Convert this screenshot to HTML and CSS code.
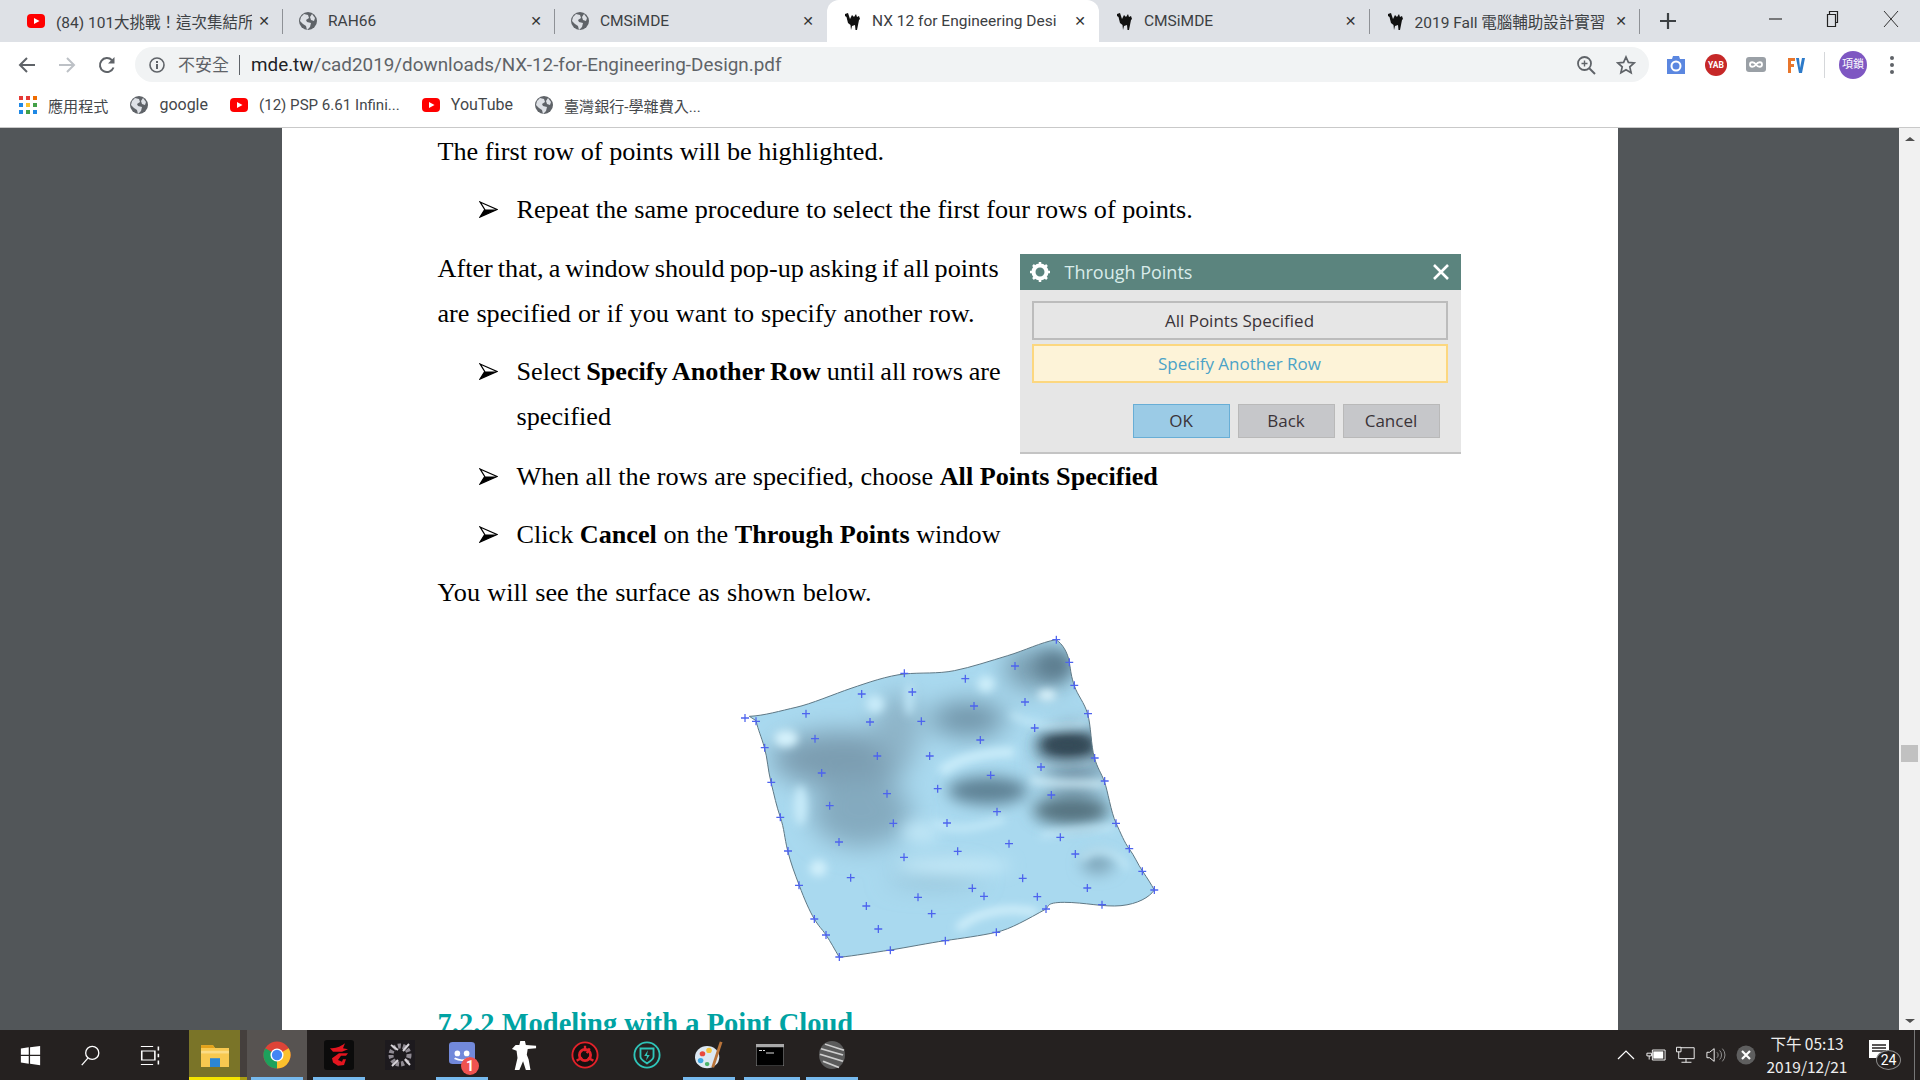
FILE: index.html
```html
<!DOCTYPE html>
<html lang="en">
<head>
    <meta charset="UTF-8">
    <meta name="viewport" content="width=device-width, initial-scale=1.0">
    <title>NX 12 for Engineering Design</title>
    <link rel="stylesheet" href="styles.css">
</head>
<body>
    <svg class="defs" width="0" height="0">
        <symbol id="i-yt" viewBox="0 0 20 20">
            <rect x="1" y="3" width="18" height="14" rx="4" fill="#f00"/>
            <path d="M8 7l5.5 3L8 13z" fill="#fff"/>
        </symbol>
        <symbol id="i-globe" viewBox="0 0 20 20">
            <circle cx="10" cy="10" r="9" fill="#5f6368"/>
            <path d="M6 3l4 1 1 3-3 2 1 2 4 1-1 4-3 3-1-4-3-2-3-3 1-4zM14 3l3 4-1 3-3-1-1-3z" fill="#dee1e6"/>
        </symbol>
        <symbol id="i-camel" viewBox="0 0 20 20">
            <path d="M3 3l3-1 1 3 1 3 2-4 2 2 2-3 1 3 2-1 1 3-1 1-1 5-1 5h-1.500l-.5-5-3 1-1 4H9l-.5-5L6 12 4.500 6 3 5z" fill="#111"/>
        </symbol>
        <symbol id="i-plus" viewBox="-13 -13 26 26">
            <path d="M-12 0H12M0-12V12" stroke="#4d63ee" stroke-width="3.800" fill="none"/>
        </symbol>
        <symbol id="i-bullet" viewBox="0 0 20 18">
            <path d="M1 1l18 8-18 8 5-8z" fill="#fff" stroke="#000" stroke-width="1.300"/>
            <path d="M6 9l13 0-18 8z" fill="#000"/>
        </symbol>
    </svg>

    <div class="tabstrip">
        <div class="tab">
            <svg class="favicon"><use href="#i-yt"/></svg>
            <span class="tab-title">(84) 101大挑戰！這次集結所</span>
            <span class="tab-close">✕</span>
        </div>
        <div class="tab">
            <svg class="favicon"><use href="#i-globe"/></svg>
            <span class="tab-title">RAH66</span>
            <span class="tab-close">✕</span>
        </div>
        <div class="tab no-line">
            <svg class="favicon"><use href="#i-globe"/></svg>
            <span class="tab-title">CMSiMDE</span>
            <span class="tab-close">✕</span>
        </div>
        <div class="tab active">
            <svg class="favicon"><use href="#i-camel"/></svg>
            <span class="tab-title">NX 12 for Engineering Desi</span>
            <span class="tab-close">✕</span>
        </div>
        <div class="tab narrow">
            <svg class="favicon"><use href="#i-camel"/></svg>
            <span class="tab-title">CMSiMDE</span>
            <span class="tab-close">✕</span>
        </div>
        <div class="tab narrow">
            <svg class="favicon"><use href="#i-camel"/></svg>
            <span class="tab-title">2019 Fall 電腦輔助設計實習</span>
            <span class="tab-close">✕</span>
        </div>
        <svg class="new-tab" width="18" height="18" viewBox="0 0 18 18"><path d="M9 1v16M1 9h16" stroke="#3c4043" stroke-width="2.200"/></svg>
        <div class="win-controls">
            <svg width="16" height="16" viewBox="0 0 16 16"><path d="M1 8h13" stroke="#333" stroke-width="1.200"/></svg>
            <svg width="16" height="18" viewBox="0 0 16 18"><path d="M4.500 4.500V1.500h8v11h-2.500M2.500 4.500h8v12h-8z" fill="none" stroke="#222" stroke-width="1.200"/></svg>
            <svg width="18" height="18" viewBox="0 0 18 18"><path d="M2 1l14 16M16 1L2 17" stroke="#333" stroke-width="1"/></svg>
        </div>
    </div>

    <div class="toolbar">
        <svg class="nav-btn" viewBox="0 0 20 20"><path d="M18 10H3M10 3l-7 7 7 7" fill="none" stroke="#5f6368" stroke-width="2"/></svg>
        <svg class="nav-btn" viewBox="0 0 20 20"><path d="M2 10h15M10 3l7 7-7 7" fill="none" stroke="#bdc1c6" stroke-width="2"/></svg>
        <svg class="nav-btn" viewBox="0 0 20 20"><path d="M16.500 12.500A7 7 0 1 1 15 5.200" fill="none" stroke="#5f6368" stroke-width="2"/><path d="M17.500 2v6.500H11z" fill="#5f6368"/></svg>
        <div class="omnibox">
            <svg class="info" width="16" height="16" viewBox="0 0 16 16"><circle cx="8" cy="8" r="7" fill="none" stroke="#5f6368" stroke-width="1.600"/><path d="M7 7h2v5H7zM7 4h2v2H7z" fill="#5f6368"/></svg>
            <span class="not-secure">不安全</span>
            <span class="url"><b>mde.tw</b>/cad2019/downloads/NX-12-for-Engineering-Design.pdf</span>
            <svg class="omni-zoom" width="20" height="20" viewBox="0 0 20 20"><circle cx="8.500" cy="8.500" r="6.500" fill="none" stroke="#5f6368" stroke-width="1.800"/><path d="M13 13l6 6" stroke="#5f6368" stroke-width="2"/><path d="M8.500 5.500v6M5.500 8.500h6" stroke="#5f6368" stroke-width="1.400"/></svg>
            <svg class="omni-star" width="20" height="20" viewBox="0 0 20 20"><path d="M10 2l2.400 5.400 5.800.6-4.400 3.900 1.300 5.800L10 14.700l-5.100 3 1.300-5.800L1.800 8l5.800-.6z" fill="none" stroke="#5f6368" stroke-width="1.700"/></svg>
        </div>
        <div class="extensions">
            <svg width="22" height="22" viewBox="0 0 22 22"><path d="M2 5h5l1-3h6l1 3h5v15H2z" fill="#5b87e0"/><circle cx="11" cy="12" r="4.500" fill="none" stroke="#fff" stroke-width="2"/></svg>
            <span class="ext-yab">YAB</span>
            <svg width="22" height="22" viewBox="0 0 22 22"><rect x="1" y="3" width="20" height="15" rx="3" fill="#9aa0a6"/><path d="M11 10.500c-2-3-6-3-6 0s4 3 6 0 6-3 6 0-4 3-6 0z" fill="none" stroke="#fff" stroke-width="1.800"/></svg>
            <svg width="22" height="22" viewBox="0 0 22 22"><path d="M3 4h7v3H6v3h3v3H6v6H3z" fill="#e8762c"/><path d="M11 4h3l1 10 2-10h3l-3 15h-3z" fill="#2c7ac9"/></svg>
            <span class="ext-divider"></span>
            <span class="avatar">項鎖</span>
            <svg class="menu-dots" width="6" height="20" viewBox="0 0 6 20"><circle cx="3" cy="3" r="2" fill="#5f6368"/><circle cx="3" cy="10" r="2" fill="#5f6368"/><circle cx="3" cy="17" r="2" fill="#5f6368"/></svg>
        </div>
    </div>

    <div class="bookmarks">
        <div class="bookmark apps">
            <span class="apps-grid">
                <i class="c-r"></i><i class="c-r"></i><i class="c-o"></i>
                <i class="c-b"></i><i class="c-y"></i><i class="c-g"></i>
                <i class="c-b"></i><i class="c-g"></i><i class="c-b"></i>
            </span>
            <span class="small">應用程式</span>
        </div>
        <div class="bookmark"><svg class="favicon"><use href="#i-globe"/></svg><span>google</span></div>
        <div class="bookmark"><svg class="favicon"><use href="#i-yt"/></svg><span class="small">(12) PSP 6.61 Infini...</span></div>
        <div class="bookmark"><svg class="favicon"><use href="#i-yt"/></svg><span>YouTube</span></div>
        <div class="bookmark"><svg class="favicon"><use href="#i-globe"/></svg><span class="small">臺灣銀行-學雜費入...</span></div>
    </div>

    <div class="viewer">
        <div class="pdf-area">
            <div class="pdf-page">
                <p>The first row of points will be highlighted.</p>
                <p class="bullet"><svg class="arrow"><use href="#i-bullet"/></svg>Repeat the same procedure to select the first four rows of points.</p>

                <div class="with-dialog">
                    <div class="with-dialog-text">
                        <p class="tight">After that, a window should pop-up asking if all points<br>are specified or if you want to specify another row.</p>
                        <p class="bullet"><svg class="arrow"><use href="#i-bullet"/></svg>Select <b>Specify Another Row</b> until all rows are specified</p>
                    </div>
                    <div class="dialog">
                        <div class="dialog-title">
                            <svg width="22" height="22" viewBox="0 0 22 22"><circle cx="11" cy="11" r="6.500" fill="none" stroke="#fff" stroke-width="4"/><path d="M11 1v4M11 17v4M1 11h4M17 11h4M4 4l3 3M15 15l3 3M18 4l-3 3M7 15l-3 3" stroke="#fff" stroke-width="2.500"/></svg>
                            <span>Through Points</span>
                            <svg class="dialog-x" width="18" height="18" viewBox="0 0 18 18"><path d="M2 2l14 14M16 2L2 16" stroke="#fff" stroke-width="2.600"/></svg>
                        </div>
                        <div class="dialog-body">
                            <div class="choice">All Points Specified</div>
                            <div class="choice hover">Specify Another Row</div>
                            <div class="dialog-buttons">
                                <span class="btn primary">OK</span>
                                <span class="btn">Back</span>
                                <span class="btn">Cancel</span>
                            </div>
                        </div>
                    </div>
                </div>

                <p class="bullet"><svg class="arrow"><use href="#i-bullet"/></svg>When all the rows are specified, choose <b>All Points Specified</b></p>
                <p class="bullet"><svg class="arrow"><use href="#i-bullet"/></svg>Click <b>Cancel</b> on the <b>Through Points</b> window</p>
                <p class="last-line">You will see the surface as shown below.</p>

                <svg class="surface" width="460" height="350" viewBox="0 0 1380 1050">
                    <defs>
                        <filter id="wide" x="-40%" y="-40%" width="180%" height="180%"><feGaussianBlur stdDeviation="38"/></filter>
                        <filter id="soft" x="-40%" y="-40%" width="180%" height="180%"><feGaussianBlur stdDeviation="22"/></filter>
                        <filter id="softer" x="-40%" y="-40%" width="180%" height="180%"><feGaussianBlur stdDeviation="12"/></filter>
                        <clipPath id="sheet"><path d="M85 292C130 290 180 275 225 265S340 225 390 208 500 170 550 165 650 165 700 155 810 125 860 110 960 70 1005 62C1025 75 1040 100 1045 130S1050 170 1060 200 1090 250 1100 285 1110 380 1120 415 1140 460 1150 487 1170 580 1185 612 1210 670 1225 690 1250 735 1265 757 1290 795 1300 813C1285 835 1250 855 1200 860S1090 850 1030 850 985 865 975 870C920 900 870 930 825 940S720 958 672 965 560 985 508 993 400 1010 355 1015C340 990 330 970 315 948S295 925 280 900 250 840 235 800 210 735 200 695 190 630 178 595 160 530 150 490 140 420 130 385 112 335 105 305z"/></clipPath>
                    </defs>
                    <g clip-path="url(#sheet)">
                        <rect width="1380" height="1050" fill="#a9d9ef"/>
                        <g filter="url(#wide)">
                            <ellipse cx="360" cy="420" rx="210" ry="85" fill="#7b9db1"/>
                            <ellipse cx="420" cy="580" rx="150" ry="105" fill="#84aabf"/>
                            <ellipse cx="530" cy="330" rx="70" ry="110" fill="#8db3c7"/>
                            <ellipse cx="740" cy="300" rx="115" ry="50" fill="#6d90a4"/>
                            <ellipse cx="950" cy="150" rx="100" ry="60" fill="#7295a8"/>
                            <ellipse cx="640" cy="775" rx="140" ry="20" fill="#90bace"/>
                            <ellipse cx="1060" cy="440" rx="90" ry="120" fill="#7b9fb2"/>
                        </g>
                        <g filter="url(#soft)">
                            <ellipse cx="1000" cy="140" rx="55" ry="45" fill="#5d7e90"/>
                            <ellipse cx="800" cy="515" rx="120" ry="42" fill="#5f8295"/>
                            <ellipse cx="1050" cy="575" rx="115" ry="42" fill="#54727f"/>
                            <ellipse cx="1130" cy="735" rx="48" ry="28" fill="#7ca2b6"/>
                            <ellipse cx="700" cy="740" rx="170" ry="24" fill="#c4e9f8"/>
                            <ellipse cx="600" cy="640" rx="55" ry="30" fill="#c0e6f6"/>
                            <ellipse cx="1040" cy="378" rx="95" ry="40" fill="#2f4350"/>
                        </g>
                        <g filter="url(#softer)">
                            <ellipse cx="1040" cy="378" rx="65" ry="20" fill="#364b59"/>
                            <path d="M870 285C930 320 1000 330 1100 312" fill="none" stroke="#c9ecfa" stroke-width="14"/>
                            <path d="M930 482C1000 500 1080 490 1150 495" fill="none" stroke="#d6f2fc" stroke-width="18"/>
                            <path d="M920 450C1000 430 1060 440 1120 430" fill="none" stroke="#c0e6f6" stroke-width="8"/>
                            <path d="M660 460C700 420 790 400 880 400" fill="none" stroke="#cbedfa" stroke-width="30"/>
                            <path d="M640 610C700 640 760 630 850 600" fill="none" stroke="#cbedfa" stroke-width="16"/>
                            <path d="M960 650C1040 630 1110 630 1180 625" fill="none" stroke="#d0effb" stroke-width="12"/>
                            <path d="M1080 720C1120 680 1190 690 1220 750" fill="none" stroke="#cdeefa" stroke-width="12"/>
                            <path d="M710 930C760 880 850 860 950 880" fill="none" stroke="#d8f3fc" stroke-width="20"/>
                            <ellipse cx="195" cy="358" rx="36" ry="26" fill="#d5f2fc"/>
                            <ellipse cx="238" cy="560" rx="20" ry="60" fill="#c8ebf9"/>
                            <ellipse cx="292" cy="748" rx="26" ry="24" fill="#d2f0fb"/>
                            <ellipse cx="462" cy="255" rx="28" ry="28" fill="#c8ebf9"/>
                            <ellipse cx="565" cy="240" rx="14" ry="50" fill="#bde4f5"/>
                            <ellipse cx="795" cy="195" rx="26" ry="24" fill="#cdeefa"/>
                            <ellipse cx="978" cy="228" rx="28" ry="16" fill="#dff5fd"/>
                        </g>
                    </g>
                    <path d="M85 292C130 290 180 275 225 265S340 225 390 208 500 170 550 165 650 165 700 155 810 125 860 110 960 70 1005 62C1025 75 1040 100 1045 130S1050 170 1060 200 1090 250 1100 285 1110 380 1120 415 1140 460 1150 487 1170 580 1185 612 1210 670 1225 690 1250 735 1265 757 1290 795 1300 813C1285 835 1250 855 1200 860S1090 850 1030 850 985 865 975 870C920 900 870 930 825 940S720 958 672 965 560 985 508 993 400 1010 355 1015C340 990 330 970 315 948S295 925 280 900 250 840 235 800 210 735 200 695 190 630 178 595 160 530 150 490 140 420 130 385 112 335 105 305z" fill="none" stroke="#5f7885" stroke-width="3"/>
                    <g class="marks">
                        <use href="#i-plus" width="26" height="26" x="59" y="284"/><use href="#i-plus" width="26" height="26" x="92" y="294"/>
                        <use href="#i-plus" width="26" height="26" x="118" y="373"/><use href="#i-plus" width="26" height="26" x="138" y="477"/>
                        <use href="#i-plus" width="26" height="26" x="165" y="582"/><use href="#i-plus" width="26" height="26" x="188" y="683"/>
                        <use href="#i-plus" width="26" height="26" x="221" y="786"/><use href="#i-plus" width="26" height="26" x="267" y="887"/>
                        <use href="#i-plus" width="26" height="26" x="302" y="935"/><use href="#i-plus" width="26" height="26" x="342" y="1001"/>
                        <use href="#i-plus" width="26" height="26" x="495" y="981"/><use href="#i-plus" width="26" height="26" x="660" y="952"/>
                        <use href="#i-plus" width="26" height="26" x="813" y="927"/><use href="#i-plus" width="26" height="26" x="962" y="857"/>
                        <use href="#i-plus" width="26" height="26" x="1130" y="844"/><use href="#i-plus" width="26" height="26" x="1287" y="800"/>
                        <use href="#i-plus" width="26" height="26" x="1251" y="744"/><use href="#i-plus" width="26" height="26" x="1212" y="676"/>
                        <use href="#i-plus" width="26" height="26" x="1172" y="600"/><use href="#i-plus" width="26" height="26" x="1138" y="473"/>
                        <use href="#i-plus" width="26" height="26" x="1108" y="404"/><use href="#i-plus" width="26" height="26" x="1088" y="271"/>
                        <use href="#i-plus" width="26" height="26" x="1047" y="186"/><use href="#i-plus" width="26" height="26" x="1032" y="117"/>
                        <use href="#i-plus" width="26" height="26" x="993" y="49"/><use href="#i-plus" width="26" height="26" x="869" y="128"/>
                        <use href="#i-plus" width="26" height="26" x="899" y="236"/><use href="#i-plus" width="26" height="26" x="928" y="314"/>
                        <use href="#i-plus" width="26" height="26" x="947" y="431"/><use href="#i-plus" width="26" height="26" x="978" y="515"/>
                        <use href="#i-plus" width="26" height="26" x="1005" y="642"/><use href="#i-plus" width="26" height="26" x="1050" y="692"/>
                        <use href="#i-plus" width="26" height="26" x="1086" y="794"/><use href="#i-plus" width="26" height="26" x="720" y="166"/>
                        <use href="#i-plus" width="26" height="26" x="746" y="248"/><use href="#i-plus" width="26" height="26" x="765" y="350"/>
                        <use href="#i-plus" width="26" height="26" x="796" y="456"/><use href="#i-plus" width="26" height="26" x="815" y="565"/>
                        <use href="#i-plus" width="26" height="26" x="851" y="661"/><use href="#i-plus" width="26" height="26" x="892" y="765"/>
                        <use href="#i-plus" width="26" height="26" x="936" y="820"/><use href="#i-plus" width="26" height="26" x="537" y="150"/>
                        <use href="#i-plus" width="26" height="26" x="561" y="206"/><use href="#i-plus" width="26" height="26" x="588" y="294"/>
                        <use href="#i-plus" width="26" height="26" x="613" y="398"/><use href="#i-plus" width="26" height="26" x="637" y="496"/>
                        <use href="#i-plus" width="26" height="26" x="665" y="599"/><use href="#i-plus" width="26" height="26" x="697" y="684"/>
                        <use href="#i-plus" width="26" height="26" x="741" y="795"/><use href="#i-plus" width="26" height="26" x="776" y="819"/>
                        <use href="#i-plus" width="26" height="26" x="409" y="212"/><use href="#i-plus" width="26" height="26" x="434" y="296"/>
                        <use href="#i-plus" width="26" height="26" x="456" y="398"/><use href="#i-plus" width="26" height="26" x="485" y="511"/>
                        <use href="#i-plus" width="26" height="26" x="504" y="600"/><use href="#i-plus" width="26" height="26" x="536" y="702"/>
                        <use href="#i-plus" width="26" height="26" x="578" y="822"/><use href="#i-plus" width="26" height="26" x="619" y="871"/>
                        <use href="#i-plus" width="26" height="26" x="242" y="271"/><use href="#i-plus" width="26" height="26" x="269" y="346"/>
                        <use href="#i-plus" width="26" height="26" x="289" y="449"/><use href="#i-plus" width="26" height="26" x="313" y="547"/>
                        <use href="#i-plus" width="26" height="26" x="341" y="656"/><use href="#i-plus" width="26" height="26" x="376" y="763"/>
                        <use href="#i-plus" width="26" height="26" x="423" y="848"/><use href="#i-plus" width="26" height="26" x="459" y="917"/>
                    </g>
                </svg>

                <h2>7.2.2 Modeling with a Point Cloud</h2>
            </div>
        </div>
        <div class="scrollbar">
            <span class="scroll-up"></span>
            <span class="scroll-thumb"></span>
            <span class="scroll-down"></span>
        </div>
    </div>

    <div class="taskbar">
        <div class="task-fixed">
            <svg width="21" height="21" viewBox="0 0 24 24"><path d="M1 4l9-1.300V11H1zM11.500 2.500L23 1v10H11.500zM1 12.500h9v8.800l-9-1.300zM11.500 12.500H23V23l-11.500-1.600z" fill="#fff"/></svg>
        </div>
        <div class="task-fixed">
            <svg width="21" height="21" viewBox="0 0 24 24"><circle cx="14" cy="9" r="7.500" fill="none" stroke="#fff" stroke-width="1.500"/><path d="M9 15l-7 8" stroke="#fff" stroke-width="1.500"/></svg>
        </div>
        <div class="task-fixed">
            <svg width="21" height="19" viewBox="0 0 24 34" preserveAspectRatio="none"><path d="M1 1h14M1 33h14M2 9h15v16H2z M21 1v7M21 14v6M21 26v7" fill="none" stroke="#fff" stroke-width="1.800"/></svg>
        </div>
        <div class="task-apps">
            <div class="task-app explorer">
                <svg width="28" height="23" viewBox="0 0 28 34" preserveAspectRatio="none"><path d="M0 2h12l2 4h14v28H0z" fill="#f8c950"/><path d="M0 2h12l2 4H0z" fill="#e3a21a"/><path d="M9 34V21h10v13z" fill="#2b86d6"/><path d="M0 10h28v4H0z" fill="#fbdc85"/></svg>
            </div>
            <div class="task-app chrome-on open">
                <svg width="28" height="28" viewBox="0 0 30 30"><circle cx="15" cy="15" r="14.500" fill="#de4437"/><path d="M15 15L2.500 7.700A14.500 14.500 0 0 0 15 29.500z" fill="#1da15c"/><path d="M15 15v14.500A14.500 14.500 0 0 0 27.500 7.700z" fill="#fbc02d"/><circle cx="15" cy="15" r="7" fill="#fff"/><circle cx="15" cy="15" r="5.500" fill="#4285f4"/></svg>
            </div>
            <div class="task-app open">
                <svg width="30" height="30" viewBox="0 0 30 36" preserveAspectRatio="none"><rect width="30" height="36" rx="3" fill="#0b0b0b"/><path d="M6 10c6 0 9-1 15-6l-2 6 5 1-6 3H9zM15 16h9l-2 3h-5l-3 5 4 2 1-3h3l-2 7-6 1-5-4-1-5z" fill="#e3151f"/></svg>
            </div>
            <div class="task-app">
                <svg width="30" height="30" viewBox="0 0 30 30"><rect width="30" height="30" fill="#1d1a1e"/><circle cx="15" cy="15" r="9" fill="none" stroke="#8f8a93" stroke-width="5" stroke-dasharray="3 2"/><path d="M6 5l7 5M24 4l-6 7M7 26l6-6M25 25l-5-6" stroke="#d7d4da" stroke-width="2"/></svg>
            </div>
            <div class="task-app open badge-wrap">
                <svg width="26" height="26" viewBox="0 0 28 32" preserveAspectRatio="none"><path d="M4 0h20a4 4 0 0 1 4 4v28l-7-5H4a4 4 0 0 1-4-4V4a4 4 0 0 1 4-4z" fill="#7289da"/><ellipse cx="9" cy="14" rx="3" ry="3.500" fill="#fff"/><ellipse cx="19" cy="14" rx="3" ry="3.500" fill="#fff"/><path d="M6 20c5 3 11 3 16 0" stroke="#fff" stroke-width="2" fill="none"/></svg>
                <span class="task-badge">1</span>
            </div>
            <div class="task-app">
                <svg width="26" height="29" viewBox="0 0 28 36" preserveAspectRatio="none"><path d="M10 0h5l1 5 11 1v3l-9 1-1 7 2 6 2 13h-5l-3-11-4 11H4l3-15-1-9-5-2 4-5 4 0z" fill="#fff"/></svg>
            </div>
            <div class="task-app">
                <svg width="28" height="28" viewBox="0 0 30 30"><circle cx="15" cy="15" r="13.500" fill="#161010" stroke="#e3222a" stroke-width="2"/><circle cx="15" cy="15" r="6" fill="none" stroke="#e3222a" stroke-width="3"/><path d="M15 5v6M24 21l-6-3M6 21l6-3M20 8l-3 5" stroke="#e3222a" stroke-width="2.500"/></svg>
            </div>
            <div class="task-app">
                <svg width="28" height="28" viewBox="0 0 30 30"><circle cx="15" cy="15" r="13.500" fill="none" stroke="#2fc4b8" stroke-width="2"/><path d="M8 8h14v9c0 3-4 5-7 7-3-2-7-4-7-7z" fill="none" stroke="#2fc4b8" stroke-width="2"/><path d="M16 10l-4 6h3l-1 5 4-6h-3z" fill="#2fc4b8"/></svg>
            </div>
            <div class="task-app open">
                <svg width="28" height="29" viewBox="0 0 30 34" preserveAspectRatio="none"><ellipse cx="13" cy="19" rx="13" ry="13" fill="#dce8f2"/><circle cx="8" cy="15" r="3" fill="#e9493c"/><circle cx="15" cy="11" r="3" fill="#f3c33c"/><circle cx="6" cy="23" r="3" fill="#3fa8e0"/><circle cx="13" cy="27" r="2.500" fill="#49b36a"/><path d="M28 1l-9 30" stroke="#b9743a" stroke-width="3"/></svg>
            </div>
            <div class="task-app open two">
                <svg width="28" height="22" viewBox="0 0 28 34" preserveAspectRatio="none"><rect width="28" height="34" fill="#000" stroke="#a6a6a6"/><rect width="28" height="5" fill="#a9a9a9"/><path d="M3 10h3M7 10h2M10 14h8" stroke="#ddd" stroke-width="1.500"/></svg>
            </div>
            <div class="task-app open">
                <svg width="26" height="28" viewBox="0 0 26 36" preserveAspectRatio="none"><ellipse cx="13" cy="18" rx="13" ry="18" fill="#5b5b5b"/><path d="M2 10l22 8M1 17l23 9M4 26l16 8M6 4l19 8" stroke="#cfcfcf" stroke-width="2"/></svg>
            </div>
        </div>
        <div class="tray">
            <svg width="18" height="10" viewBox="0 0 18 10"><path d="M1 9l8-8 8 8" fill="none" stroke="#fff" stroke-width="1.200"/></svg>
            <svg width="22" height="14" viewBox="0 0 22 14"><path d="M7 1.500h14v11H7z" fill="none" stroke="#fff"/><path d="M8 3h11v8H8z" fill="#fff"/><path d="M1 5h5v3H1zM3.500 8v4" stroke="#fff" fill="none"/></svg>
            <svg width="22" height="18" viewBox="0 0 22 18"><path d="M3 1h17v12H3zM11 13v4M6 17h11" fill="none" stroke="#fff"/><path d="M0.500 0.500h5v5h-5z" fill="#252120" stroke="#fff"/></svg>
            <svg width="22" height="18" viewBox="0 0 22 18"><path d="M1 6h3l5-4v14l-5-4H1z" fill="none" stroke="#fff"/><path d="M12 6a4 4 0 0 1 0 6M15 4a7 7 0 0 1 0 10M18 2a10 10 0 0 1 0 14" fill="none" stroke="#9b9b9b"/></svg>
            <svg width="20" height="20" viewBox="0 0 20 20"><circle cx="10" cy="10" r="9.500" fill="#5f5f5f"/><path d="M6 6l8 8M14 6l-8 8" stroke="#fff" stroke-width="2.200"/></svg>
            <div class="clock"><span>下午 05:13</span><span>2019/12/21</span></div>
            <div class="action-center">
                <svg width="20" height="18" viewBox="0 0 20 18"><path d="M0 0h20v18H0z" fill="#fff"/><path d="M3 5h14M3 8h14M3 11h14" stroke="#252120" stroke-width="1.400"/></svg>
                <span class="notif-count">24</span>
            </div>
            <span class="show-desktop"></span>
        </div>
    </div>
</body>
</html>
```

FILE: styles.css
```css
html, body {
    margin: 0;
    padding: 0;
    width: 1920px;
    height: 1080px;
    overflow: hidden;
}

body {
    display: flex;
    flex-direction: column;
    font-family: Roboto, "Noto Sans CJK TC", sans-serif;
    color: #3c4043;
    background-color: #fff;
}

.defs {
    position: absolute;
}

/* tab strip */
.tabstrip {
    height: 42px;
    flex: none;
    display: flex;
    align-items: stretch;
    padding-left: 11px;
    background-color: #dee1e6;
}

.tab {
    width: 272px;
    box-sizing: border-box;
    display: flex;
    align-items: center;
    padding: 0 10px 0 15px;
    font-size: 15.5px;
    position: relative;
}

.tab.narrow {
    width: 270.500px;
}

.tab::after {
    content: "";
    position: absolute;
    right: 0;
    top: 9px;
    width: 1px;
    height: 25px;
    background-color: #8e9196;
}

.tab.no-line::after,
.tab.active::after {
    display: none;
}

.tab.active {
    background-color: #fff;
    border-radius: 12px 12px 0 0;
}

.favicon {
    width: 20px;
    height: 20px;
    flex: none;
}

.tab-title {
    flex: 1;
    margin-left: 10px;
    overflow: hidden;
    white-space: nowrap;
}

.tab-close {
    flex: none;
    width: 18px;
    margin-left: 3px;
    font-size: 14px;
    font-family: "DejaVu Sans", sans-serif;
    font-weight: bold;
    color: #333;
    text-align: center;
}

.new-tab {
    align-self: center;
    margin-left: 19px;
}

.win-controls {
    margin-left: auto;
    width: 152px;
    padding-right: 20px;
    box-sizing: border-box;
    display: flex;
    align-items: center;
    justify-content: space-between;
    padding-bottom: 4px;
}

/* toolbar */
.toolbar {
    height: 42px;
    flex: none;
    display: flex;
    align-items: center;
    padding-left: 17px;
    background-color: #fff;
}

.nav-btn {
    width: 20px;
    height: 20px;
    margin-top: 3px;
    margin-right: 20px;
    flex: none;
}

.omnibox {
    width: 1514px;
    height: 35px;
    box-sizing: border-box;
    margin-left: -2px;
    margin-top: 3px;
    display: flex;
    align-items: center;
    padding: 0 14px;
    border-radius: 18px;
    background-color: #f1f3f4;
    flex: none;
}

.info {
    flex: none;
}

.not-secure {
    margin-left: 13px;
    padding-right: 10px;
    border-right: 1px solid #5f6368;
    font-size: 17px;
    line-height: 20px;
    color: #5f6368;
}

.url {
    margin-left: 11px;
    font-size: 18.850px;
    color: #5f6368;
    white-space: nowrap;
}

.url b {
    font-weight: normal;
    color: #202124;
}

.omni-zoom {
    flex: none;
    margin-left: auto;
    margin-right: -4px;
}

.omni-star {
    flex: none;
    margin-left: 24px;
    margin-right: -1px;
}

.extensions {
    flex: 1;
    display: flex;
    align-items: center;
    margin-top: 3px;
    padding-left: 16px;
    gap: 18px;
}

.ext-yab {
    width: 22px;
    height: 22px;
    border-radius: 50%;
    background-color: #c62828;
    color: #fff;
    font-size: 8.500px;
    font-weight: bold;
    line-height: 22px;
    text-align: center;
}

.ext-divider {
    width: 1px;
    height: 26px;
    background-color: #d5d7da;
    margin-left: -1px;
}

.avatar {
    width: 28px;
    height: 28px;
    margin-left: -4px;
    border-radius: 50%;
    background-color: #7e57c2;
    color: #fff;
    font-size: 11px;
    line-height: 28px;
    text-align: center;
}

.menu-dots {
    margin-left: 4px;
}

/* bookmarks bar */
.bookmarks {
    height: 44px;
    flex: none;
    display: flex;
    align-items: center;
    gap: 21px;
    padding-left: 19px;
    padding-bottom: 2px;
    box-sizing: border-box;
    background-color: #fff;
    border-bottom: 1px solid #c9c9c9;
    font-size: 16px;
    color: #44474b;
}

.bookmark {
    display: flex;
    align-items: center;
    gap: 10px;
    white-space: nowrap;
}

.bookmark .small {
    font-size: 15.100px;
}

.apps {
    gap: 11px;
}

.apps-grid {
    width: 18px;
    display: grid;
    grid-template-columns: repeat(3, 4px);
    gap: 3px;
}

.apps-grid i {
    display: block;
    height: 4px;
}

.c-r { background-color: #e53935; }
.c-o { background-color: #ef6c00; }
.c-b { background-color: #1e88e5; }
.c-y { background-color: #fbc02d; }
.c-g { background-color: #43a047; }

/* pdf viewer */
.viewer {
    flex: 1;
    min-height: 0;
    display: flex;
}

.pdf-area {
    flex: 1;
    display: flex;
    justify-content: center;
    background-color: #525659;
    overflow: hidden;
}

.pdf-page {
    width: 1336px;
    box-sizing: border-box;
    padding: 1px 100px 0 156px;
    background-color: #fff;
    font-family: "Liberation Serif", serif;
    font-size: 26.200px;
    line-height: 45px;
    color: #000;
}

.pdf-page p {
    margin: 0 0 13.300px;
}

.pdf-page .last-line {
    word-spacing: 0.700px;
}

.bullet {
    position: relative;
    padding-left: 79px;
}

.arrow {
    position: absolute;
    left: 41px;
    top: 14px;
    width: 19px;
    height: 17px;
}

.with-dialog {
    display: flex;
    align-items: flex-start;
}

.with-dialog-text {
    width: 565px;
    flex: none;
    word-spacing: -0.900px;
}

.pdf-page .tight {
    white-space: nowrap;
    word-spacing: 0.400px;
}

.pdf-page .tight::first-line {
    word-spacing: -1.500px;
}

.dialog {
    width: 441px;
    height: 200px;
    margin-top: 8px;
    margin-left: 17px;
    flex: none;
    box-sizing: border-box;
    background-color: #e6e6e6;
    border-bottom: 2px solid #c4c4c4;
    font-family: "Open Sans", sans-serif;
    font-size: 17px;
    line-height: 24px;
    word-spacing: 0;
}

.dialog-title {
    height: 36px;
    display: flex;
    align-items: center;
    padding: 0 11px 0 9px;
    background-color: #5b847e;
    color: #d9ecea;
    font-size: 18px;
}

.dialog-title span {
    margin-left: 14px;
}

.dialog-x {
    margin-left: auto;
}

.dialog-body {
    padding: 11px 13px 0 12px;
}

.choice {
    height: 39px;
    box-sizing: border-box;
    border: 2px solid #bcbcbc;
    text-align: center;
    line-height: 35px;
    color: #3a3338;
    margin-bottom: 4px;
}

.choice.hover {
    background-color: #fdf3d8;
    border-color: #fcd77f;
    color: #4ba3c7;
}

.dialog-buttons {
    display: flex;
    justify-content: flex-end;
    gap: 8px;
    margin-top: 21px;
    padding-right: 8px;
}

.btn {
    width: 97px;
    height: 34px;
    box-sizing: border-box;
    border: 1px solid #b9b9b9;
    background-color: #c6c7ca;
    color: #3a3338;
    text-align: center;
    line-height: 32px;
}

.btn.primary {
    background-color: #9bcbe6;
    border-color: #68aed6;
}

.surface {
    display: block;
    margin: -9px 0 0 283px;
}

.pdf-page h2 {
    margin: 35px 0 0;
    font-size: 28.500px;
    line-height: 40px;
    font-weight: bold;
    color: #00a3a3;
    white-space: nowrap;
}

.scrollbar {
    width: 21px;
    flex: none;
    position: relative;
    background-color: #f1f1f1;
}

.scroll-up, .scroll-down, .scroll-thumb {
    position: absolute;
}

.scroll-up {
    left: 6px;
    top: 9px;
    border: 5px solid transparent;
    border-top: none;
    border-bottom: 4px solid #505050;
}

.scroll-down {
    left: 6px;
    bottom: 7px;
    border: 5px solid transparent;
    border-bottom: none;
    border-top: 4px solid #505050;
}

.scroll-thumb {
    left: 2px;
    top: 617px;
    width: 17px;
    height: 17px;
    background-color: #c1c1c1;
}

/* taskbar */
.taskbar {
    height: 50px;
    flex: none;
    display: flex;
    align-items: stretch;
    background-color: #252120;
    color: #fff;
}

.task-fixed {
    width: 60px;
    flex: none;
    display: flex;
    align-items: center;
    justify-content: center;
}

.task-apps {
    display: flex;
    margin-left: 9px;
    gap: 1.670px;
}

.task-app {
    width: 60px;
    box-sizing: border-box;
    display: flex;
    align-items: center;
    justify-content: center;
    position: relative;
}

.task-app.open::after {
    content: "";
    position: absolute;
    left: 4px;
    right: 4px;
    bottom: 0;
    height: 3px;
    background-color: #76b9ed;
}

.task-app.two::after {
    right: 0;
}

.explorer {
    width: 58px;
    margin-right: -1.670px;
    padding-right: 7px;
    background: linear-gradient(to right, #7a7428 51px, #453f3d 51px);
}

.explorer::after {
    content: "";
    position: absolute;
    left: 0;
    right: 0;
    bottom: 0;
    height: 3px;
    background: linear-gradient(to right, #f5e500 51px, #a89c12 51px);
}

.chrome-on {
    background-color: #575351;
}

.task-badge {
    position: absolute;
    right: 13px;
    bottom: 5px;
    width: 18px;
    height: 18px;
    border-radius: 50%;
    background-color: #ef5350;
    color: #fff;
    font-size: 14px;
    font-weight: bold;
    line-height: 18px;
    text-align: center;
}

.tray {
    margin-left: auto;
    display: flex;
    align-items: center;
    gap: 10px;
}

.tray > svg {
    width: 20px;
}

.clock {
    display: flex;
    flex-direction: column;
    align-items: center;
    width: 84px;
    margin-left: -1px;
    margin-right: 3px;
    font-family: "Noto Sans CJK TC", sans-serif;
    font-size: 15.500px;
    line-height: 23px;
    color: #eee;
}

.action-center {
    position: relative;
    width: 30px;
    margin-left: 7px;
    margin-right: 5px;
    margin-bottom: 8px;
}

.notif-count {
    position: absolute;
    left: 7px;
    top: 10px;
    width: 25px;
    height: 20px;
    box-sizing: border-box;
    border: 1px solid #8a8a8a;
    border-radius: 50%;
    background-color: #252120;
    font-size: 14px;
    line-height: 18px;
    text-align: center;
}

.show-desktop {
    align-self: stretch;
    width: 1px;
    margin: 0 5px 0 0;
    background-color: #777;
}
```
